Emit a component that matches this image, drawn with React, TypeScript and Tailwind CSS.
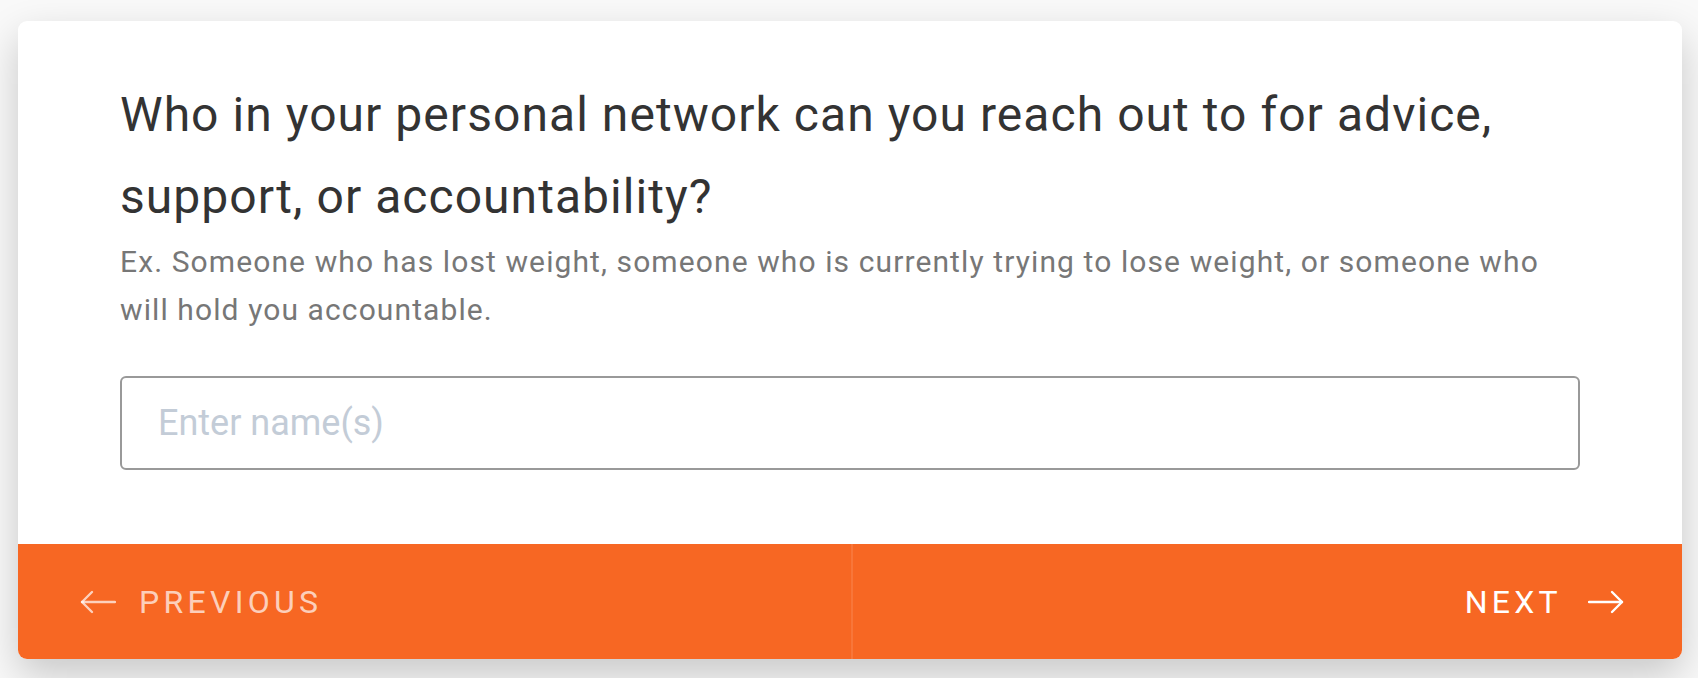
import { useState } from "react"

function ArrowLeft() {
  return (
    <svg width="36" height="24" viewBox="0 0 36 24" fill="none" stroke="currentColor" strokeWidth="2.4" strokeLinecap="round" strokeLinejoin="round">
      <path d="M35 12H2" />
      <path d="M12 2L2 12l10 10" />
    </svg>
  )
}

function ArrowRight() {
  return (
    <svg width="36" height="24" viewBox="0 0 36 24" fill="none" stroke="currentColor" strokeWidth="2.4" strokeLinecap="round" strokeLinejoin="round">
      <path d="M1 12h33" />
      <path d="M24 2l10 10-10 10" />
    </svg>
  )
}

export default function App() {
  const [names, setNames] = useState("")
  return (
    <div
      className="min-h-[678px] bg-[#f9f9f9] pt-[21px] pl-[18px]"
      style={{ fontFamily: "Roboto, 'Noto Sans', sans-serif" }}
    >
      <div className="w-[1664px] rounded-[9px] overflow-hidden bg-white shadow-[0_16px_40px_rgba(0,0,0,0.2)]">
        <div className="pt-[53px] px-[102px] pb-[74px]">
          <h1 className="text-[48px] leading-[82px] tracking-[1.05px] text-[#333333] font-normal">
            Who in your personal network can you reach out to for advice, support, or accountability?
          </h1>
          <p className="text-[30px] leading-[48px] tracking-[1.1px] text-[#777777]">
            Ex. Someone who has lost weight, someone who is currently trying to lose weight, or someone who will hold you accountable.
          </p>
          <input
            value={names}
            onChange={(e) => setNames(e.target.value)}
            placeholder="Enter name(s)"
            className="mt-[42px] block w-full h-[94px] border-2 border-[#999999] rounded-[6px] px-[36px] text-[36px] text-[#333333] placeholder:text-[#c3ccd7] outline-none"
          />
        </div>
        <div className="flex h-[115px] bg-[#f76723] text-[32px] tracking-[4.3px]">
          <button className="flex-1 flex items-center gap-[23px] pl-[62px] text-white/70 border-r-2 border-white/10">
            <ArrowLeft />
            <span>PREVIOUS</span>
          </button>
          <button className="flex-1 flex items-center justify-end gap-[26px] pr-[58px] text-white">
            <span>NEXT</span>
            <ArrowRight />
          </button>
        </div>
      </div>
    </div>
  )
}
